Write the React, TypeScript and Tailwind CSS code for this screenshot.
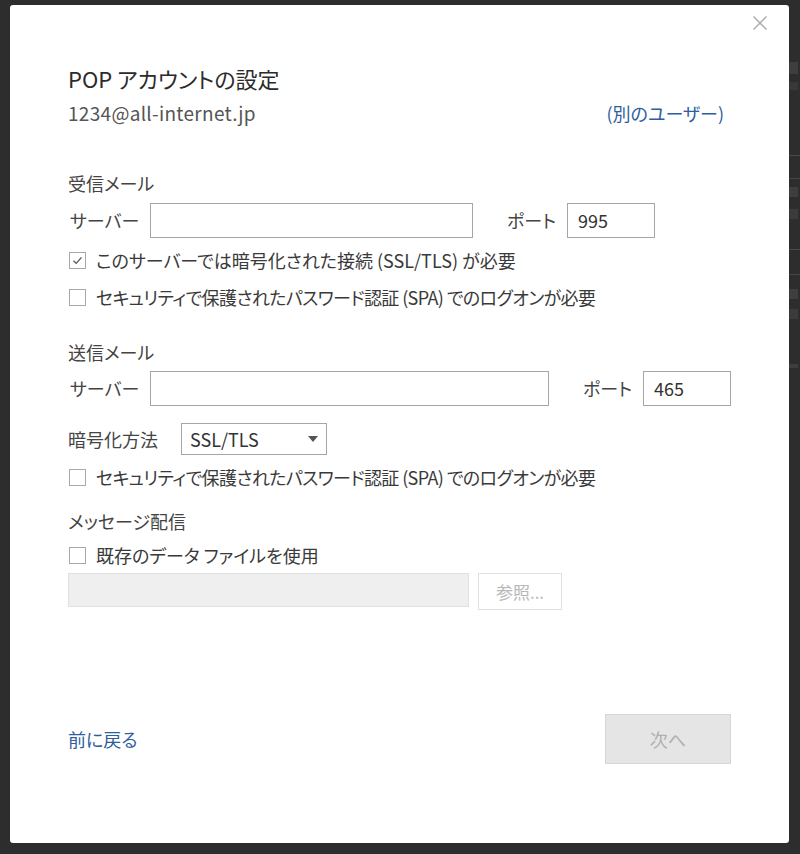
function Checkbox({ checked = false, label, tight = false }: { checked?: boolean; label: string; tight?: boolean }) {
  return (
    <div className="flex h-[24px] items-center">
      <div className="ml-[1px] flex h-[17px] w-[17px] items-center justify-center border border-[#a8a8a8] bg-white">
        {checked && (
          <svg width="13" height="13" viewBox="0 0 13 13" fill="none">
            <path d="M2.5 6.8 L5.2 9.4 L10.5 3.4" stroke="#555" strokeWidth="1.3" />
          </svg>
        )}
      </div>
      <span className={tight ? "ml-[10px] text-[18px] leading-[24px] tracking-[-0.6px] text-[#3a3a3a]" : "ml-[10px] text-[18px] leading-[24px] text-[#3a3a3a]"}>
        {label}
      </span>
    </div>
  )
}

function ServerRow({ width }: { width: string }) {
  return (
    <div className="flex h-[36px] items-center">
      <span className="w-[82px] pl-[2px] text-[18px] text-[#444]">サーバー</span>
      <div className={`h-[35px] border border-[#a6a6a6] bg-white ${width}`} />
    </div>
  )
}

function Port({ value }: { value: string }) {
  return (
    <>
      <span className="ml-[34px] w-[60px] text-[18px] text-[#444]">ポート</span>
      <div className="flex h-[35px] w-[88px] items-center border border-[#a6a6a6] bg-white pl-[10px] text-[18px] text-[#333]">
        {value}
      </div>
    </>
  )
}

function EdgeStrip() {
  return (
    <div className="flex w-[11px] flex-col">
      <div className="mt-[62px] h-[12px] w-[9px] bg-[#4a4a4a] opacity-60" />
      <div className="mt-[8px] h-[8px] w-[9px] bg-[#444] opacity-50" />
      <div className="mt-[65px] h-px bg-[#4a4a4a]" />
      <div className="mt-[22px] h-px bg-[#454545]" />
      <div className="mt-[8px] h-[10px] w-[9px] bg-[#4a4a4a] opacity-60" />
      <div className="mt-[12px] h-[10px] w-[9px] bg-[#444] opacity-60" />
      <div className="mt-[30px] h-px bg-[#4a4a4a]" />
      <div className="mt-[24px] h-px bg-[#454545]" />
      <div className="mt-[14px] h-[10px] w-[9px] bg-[#4a4a4a] opacity-60" />
      <div className="mt-[10px] h-[10px] w-[9px] bg-[#444] opacity-60" />
      <div className="mt-[45px] h-[4px] w-[9px] bg-[#4a4a4a] opacity-60" />
    </div>
  )
}

export default function App() {
  return (
    <div className="flex h-[854px] w-[800px] bg-[#2d2d2d] font-['Noto_Sans_CJK_JP','Noto_Sans',sans-serif] [font-feature-settings:'palt']">
      <div className="ml-[10px] mt-[5px] flex h-[838px] w-[779px] flex-col rounded-[3px] bg-white px-[58px]">
        <div className="flex h-[45px] justify-end pt-[10px]">
          <svg className="-mr-[37px]" width="16" height="16" viewBox="0 0 16 16" fill="none">
            <path d="M1.5 1.5 L14.5 14.5 M14.5 1.5 L1.5 14.5" stroke="#a9a9a9" strokeWidth="1.4" />
          </svg>
        </div>

        <h1 className="mt-[14px] h-[28px] text-[22px] leading-[28px] text-[#2b2b2b]">POP アカウントの設定</h1>

        <div className="mt-[9px] flex h-[24px] items-center justify-between leading-[24px]">
          <span className="text-[19px] tracking-[0.3px] text-[#555]">1234@all-internet.jp</span>
          <span className="mr-[7px] text-[18px] text-[#2e5e9e]">(別のユーザー)</span>
        </div>

        <div className="mt-[46px] h-[24px] text-[18px] leading-[24px] text-[#444]">受信メール</div>
        <div className="mt-[7px] flex items-center">
          <ServerRow width="w-[323px]" />
          <Port value="995" />
        </div>
        <div className="mt-[10px]">
          <Checkbox checked label="このサーバーでは暗号化された接続 (SSL/TLS) が必要" />
        </div>
        <div className="mt-[13px]">
          <Checkbox tight label="セキュリティで保護されたパスワード認証 (SPA) でのログオンが必要" />
        </div>

        <div className="mt-[31px] h-[24px] text-[18px] leading-[24px] text-[#444]">送信メール</div>
        <div className="mt-[6px] flex items-center">
          <ServerRow width="w-[399px]" />
          <Port value="465" />
        </div>
        <div className="mt-[17px] flex h-[32px] items-center">
          <span className="w-[113px] text-[18px] text-[#444]">暗号化方法</span>
          <div className="flex h-[32px] w-[146px] items-center justify-between border border-[#a6a6a6] bg-white pl-[8px] pr-[8px] text-[18px] text-[#333]">
            <span>SSL/TLS</span>
            <svg width="10" height="6" viewBox="0 0 10 6">
              <path d="M0 0 H10 L5 6 Z" fill="#555" />
            </svg>
          </div>
        </div>
        <div className="mt-[10px]">
          <Checkbox tight label="セキュリティで保護されたパスワード認証 (SPA) でのログオンが必要" />
        </div>

        <div className="mt-[20px] h-[24px] text-[18px] leading-[24px] text-[#444]">メッセージ配信</div>
        <div className="mt-[10px]">
          <Checkbox label="既存のデータ ファイルを使用" />
        </div>
        <div className="mt-[6px] flex items-start">
          <div className="h-[34px] w-[401px] border border-[#e0e0e0] bg-[#efefef]" />
          <div className="ml-[9px] flex h-[37px] w-[84px] items-center justify-center border border-[#e0e0e0] bg-white text-[17px] text-[#b8b8b8]">
            参照...
          </div>
        </div>

        <div className="mt-[104px] flex items-center justify-between">
          <span className="text-[18px] text-[#2e5e9e]">前に戻る</span>
          <div className="flex h-[50px] w-[126px] items-center justify-center border border-[#d6d6d6] bg-[#e5e5e5] text-[18px] text-[#b0b0b0]">
            次へ
          </div>
        </div>
      </div>
      <EdgeStrip />
    </div>
  )
}
